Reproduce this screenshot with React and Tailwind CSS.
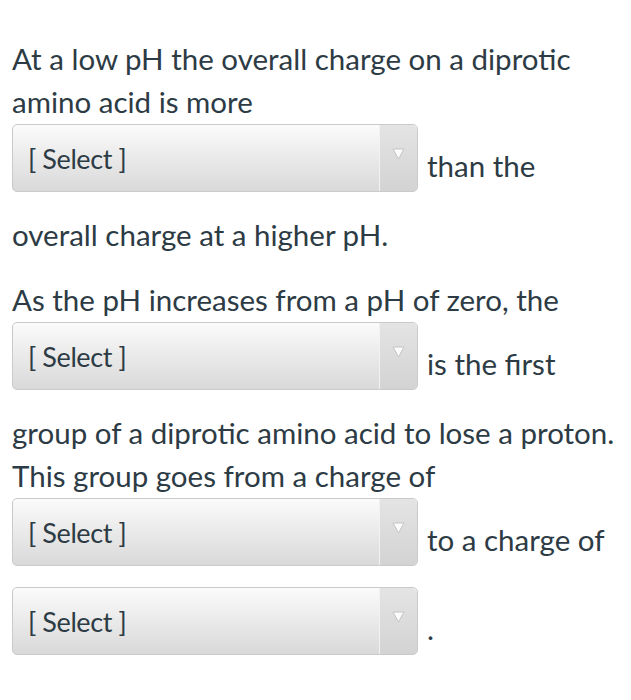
import React from 'react'

const SelectBox = () => {
    return (
        <div className="relative flex h-[68px] w-[406px] shrink-0 items-center rounded-[5px] border border-[#cacaca] bg-gradient-to-b from-[#fbfbfb] to-[#d9d9d9]">
            <span className="pl-[15px] text-[27px] tracking-[-0.4px] text-[#2d3b45]">[ Select ]</span>
            <div className="absolute right-0 top-0 flex h-full w-[38px] justify-center rounded-r-[5px] border-l border-[#f2f2f2] bg-gradient-to-b from-[#e4e4e4] to-[#d3d3d3] pt-[23px]">
                <svg width="13" height="12" viewBox="0 0 13 12">
                    <polygon points="1,1 12,1 6.5,11" fill="#fbfbfb" stroke="#c4c4c4" strokeWidth="1" strokeLinejoin="round" />
                </svg>
            </div>
        </div>
    )
}

const SelectRow = ({ after }) => {
    return (
        <div className="mb-[21px] mt-[1px] flex items-end">
            <SelectBox />
            <span className="mb-[5px] ml-[9px]">{after}</span>
        </div>
    )
}

const App = () => {
    return (
        <div className="min-h-[700px] bg-white px-[12px] pt-[37px] text-[29.5px] leading-[43px] text-[#2d3b45]" style={{ fontFamily: 'Lato, "Noto Sans", sans-serif' }}>
            <div>At a low pH the overall charge on a diprotic<br />amino acid is more</div>
            <SelectRow after="than the" />
            <div>overall charge at a higher pH.</div>

            <div className="mt-[22px]">As the pH increases from a pH of zero, the</div>
            <SelectRow after="is the first" />
            <div className="whitespace-nowrap">group of a diprotic amino acid to lose a proton.<br />This group goes from a charge of</div>
            <SelectRow after="to a charge of" />
            <div className="flex items-end">
                <SelectBox />
                <span className="mb-[5px] ml-[9px]">.</span>
            </div>
        </div>
    )
}

export default App
